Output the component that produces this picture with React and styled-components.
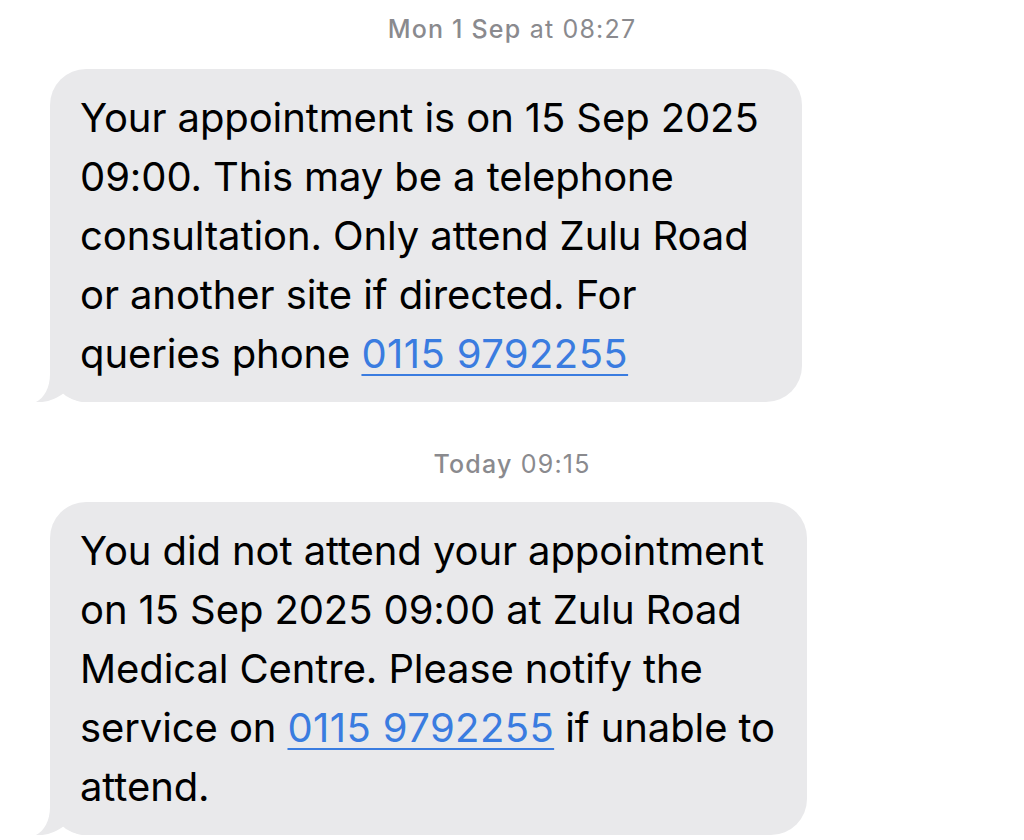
import React from 'react';
import styled, { createGlobalStyle } from 'styled-components';

const GlobalStyle = createGlobalStyle`
  html, body {
    margin: 0;
    padding: 0;
    background: #ffffff;
  }
  body {
    font-family: Inter, "Noto Sans", "Liberation Sans", sans-serif;
    -webkit-font-smoothing: antialiased;
  }
`;

const Thread = styled.main`
  display: flex;
  flex-direction: column;
  align-items: flex-start;
  padding: 15px 0 0 50px;
  width: 1024px;
  height: 840px;
  box-sizing: border-box;
  overflow: hidden;
`;

const Stamp = styled.div`
  align-self: stretch;
  margin-left: -50px;
  margin-top: ${(p) => p.$top || 0}px;
  text-align: center;
  font-size: 25px;
  line-height: 28px;
  color: #8a8a8e;
  letter-spacing: 1.2px;

  b {
    font-weight: 500;
  }
`;

const Bubble = styled.div`
  position: relative;
  isolation: isolate;
  width: ${(p) => p.$width}px;
  box-sizing: border-box;
  margin-top: ${(p) => p.$top}px;
  padding: 19px 20px 19px 30px;
  background: #e9e9eb;
  border-radius: 36px;
  color: #000000;
  font-size: 40px;
  line-height: 59px;
  letter-spacing: -0.1px;
`;

const Tail = styled.svg`
  position: absolute;
  z-index: -1;
  left: -14px;
  bottom: 0;
  width: 54px;
  height: 40px;
  display: block;
`;

const Phone = styled.a`
  color: #3a7ce0;
  text-decoration: underline;
  text-decoration-thickness: 2px;
  text-underline-offset: 6px;
  letter-spacing: 0.4px;
`;

const Message = ({ width, top, children }) => (
  <Bubble $width={width} $top={top}>
    {children}
    <Tail viewBox="-14 -40 54 40">
      <path
        d="M0,-40 L0,-28 C0,-14 -6,-4 -14,0 C-4,1 6,-3 14,-9 C20,-4 26,-1 32,0 L40,0 L40,-40 Z"
        fill="#e9e9eb"
      />
    </Tail>
  </Bubble>
);

export default function App() {
  return (
    <>
      <GlobalStyle />
      <Thread>
        <Stamp>
          <b>Mon 1 Sep</b> at 08:27
        </Stamp>
        <Message width={752} top={26}>
          Your appointment is on 15 Sep 2025
          <br />
          09:00. This may be a telephone
          <br />
          consultation. Only attend Zulu Road
          <br />
          or another site if directed. For
          <br />
          queries phone <Phone href="#">0115 9792255</Phone>
        </Message>
        <Stamp $top={48}>
          <b>Today</b> 09:15
        </Stamp>
        <Message width={757} top={24}>
          You did not attend your appointment
          <br />
          on 15 Sep 2025 09:00 at Zulu Road
          <br />
          Medical Centre. Please notify the
          <br />
          service on <Phone href="#">0115 9792255</Phone> if unable to
          <br />
          attend.
        </Message>
      </Thread>
    </>
  );
}
